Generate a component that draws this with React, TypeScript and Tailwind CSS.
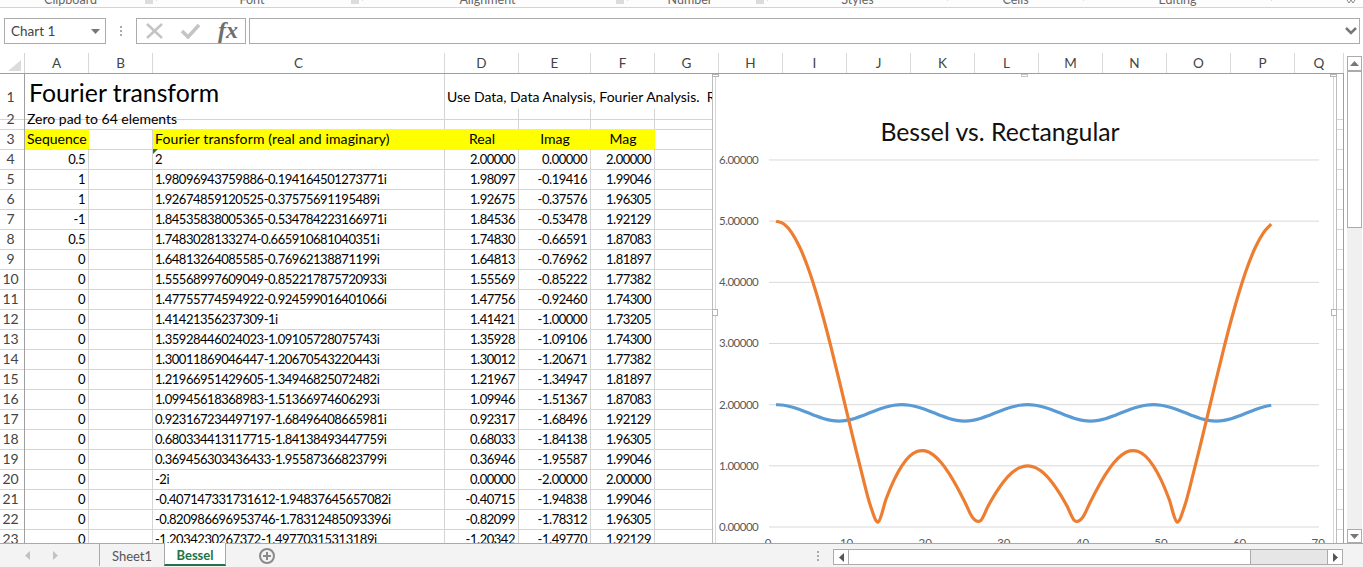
import React from 'react'

const colWidths = 'grid-cols-[25px_64px_64px_292px_74px_72px_64px_64px_64px_64px_64px_64px_64px_64px_64px_64px_64px_49px]'
const colNames = ['A', 'B', 'C', 'D', 'E', 'F', 'G', 'H', 'I', 'J', 'K', 'L', 'M', 'N', 'O', 'P', 'Q']
const num = 'text-[13px] tracking-[-0.47px]'

const rows: [string, string, string, string, string, string][] = [
  ['4', '0.5', '2', '2.00000', '0.00000', '2.00000'],
  ['5', '1', '1.98096943759886-0.194164501273771i', '1.98097', '-0.19416', '1.99046'],
  ['6', '1', '1.92674859120525-0.37575691195489i', '1.92675', '-0.37576', '1.96305'],
  ['7', '-1', '1.84535838005365-0.534784223166971i', '1.84536', '-0.53478', '1.92129'],
  ['8', '0.5', '1.7483028133274-0.665910681040351i', '1.74830', '-0.66591', '1.87083'],
  ['9', '0', '1.64813264085585-0.76962138871199i', '1.64813', '-0.76962', '1.81897'],
  ['10', '0', '1.55568997609049-0.852217875720933i', '1.55569', '-0.85222', '1.77382'],
  ['11', '0', '1.47755774594922-0.924599016401066i', '1.47756', '-0.92460', '1.74300'],
  ['12', '0', '1.41421356237309-1i', '1.41421', '-1.00000', '1.73205'],
  ['13', '0', '1.35928446024023-1.09105728075743i', '1.35928', '-1.09106', '1.74300'],
  ['14', '0', '1.30011869046447-1.20670543220443i', '1.30012', '-1.20671', '1.77382'],
  ['15', '0', '1.21966951429605-1.34946825072482i', '1.21967', '-1.34947', '1.81897'],
  ['16', '0', '1.09945618368983-1.51366974606293i', '1.09946', '-1.51367', '1.87083'],
  ['17', '0', '0.923167234497197-1.68496408665981i', '0.92317', '-1.68496', '1.92129'],
  ['18', '0', '0.680334413117715-1.84138493447759i', '0.68033', '-1.84138', '1.96305'],
  ['19', '0', '0.369456303436433-1.95587366823799i', '0.36946', '-1.95587', '1.99046'],
  ['20', '0', '-2i', '0.00000', '-2.00000', '2.00000'],
  ['21', '0', '-0.407147331731612-1.94837645657082i', '-0.40715', '-1.94838', '1.99046'],
  ['22', '0', '-0.820986696953746-1.78312485093396i', '-0.82099', '-1.78312', '1.96305'],
  ['23', '0', '-1.2034230267372-1.49770315313189i', '-1.20342', '-1.49770', '1.92129'],
]

const ribbon = [
  { name: 'Clipboard', w: 'w-[157px]', launcher: true },
  { name: 'Font', w: 'w-[206px]', launcher: true },
  { name: 'Alignment', w: 'w-[265px]', launcher: true },
  { name: 'Number', w: 'w-[140px]', launcher: true },
  { name: 'Styles', w: 'w-[180px]', launcher: false },
  { name: 'Cells', w: 'w-[136px]', launcher: false },
  { name: 'Editing', w: 'w-[188px]', launcher: false },
]

// magnitude of the 64 point transform of a zero padded sequence
const magnitude = (seq: number[]) => {
  const out: number[] = []
  for (let k = 0; k < 64; k++) {
    let re = 0
    let im = 0
    seq.forEach((v, n) => {
      re += v * Math.cos((2 * Math.PI * n * k) / 64)
      im -= v * Math.sin((2 * Math.PI * n * k) / 64)
    })
    out.push(Math.sqrt(re * re + im * im))
  }
  return out
}

const smoothPath = (vals: number[]) => {
  const pts = vals.map((v, i) => [767.2 + (i + 1) * 7.86, 527 - v * 61.17])
  let d = `M${pts[0][0]} ${pts[0][1]}`
  for (let i = 0; i < pts.length - 1; i++) {
    const p0 = pts[Math.max(i - 1, 0)]
    const p1 = pts[i]
    const p2 = pts[i + 1]
    const p3 = pts[Math.min(i + 2, pts.length - 1)]
    d += ` C${p1[0] + (p2[0] - p0[0]) / 6} ${p1[1] + (p2[1] - p0[1]) / 6} ${p2[0] - (p3[0] - p1[0]) / 6} ${p2[1] - (p3[1] - p1[1]) / 6} ${p2[0]} ${p2[1]}`
  }
  return d
}

const yLabels = [0, 1, 2, 3, 4, 5, 6]
const xLabels = [0, 10, 20, 30, 40, 50, 60, 70]

function Chart() {
  return (
    <div className="absolute left-[712px] top-0 w-[625px] h-[469px] border-x border-[#bdbdbd] px-[2px] bg-white z-10">
      <div className="w-full h-full border-x border-[#d6d6d6]">
        <svg width="619" height="469" viewBox="715 74 619 469" className="block">
          <text x="999" y="141" textAnchor="middle" fontSize="24.8" fill="#111">Bessel vs. Rectangular</text>
          {yLabels.map((v) => (
            <g key={v}>
              <line x1="768" x2="1318" y1={527 - v * 61.17} y2={527 - v * 61.17} stroke="#d9d9d9" strokeWidth="1" />
              <text x="718" y={531 - v * 61.17} fontSize="11.5" letterSpacing="-0.5" fill="#595959">{v.toFixed(5)}</text>
            </g>
          ))}
          {xLabels.map((v) => (
            <text key={v} x={767 + v * 7.86} y="547" textAnchor="middle" fontSize="11.5" fill="#595959">{v}</text>
          ))}
          <path d={smoothPath(magnitude([0.5, 1, 1, -1, 0.5]))} fill="none" stroke="#5b9bd5" strokeWidth="3.2" />
          <path d={smoothPath(magnitude([1, 1, 1, 1, 1]))} fill="none" stroke="#ed7d31" strokeWidth="3.2" />
        </svg>
      </div>
      <div className="absolute -left-[1px] top-[235px] w-[6px] h-[7px] bg-white border border-[#b5b5b5]" />
      <div className="absolute -right-[1px] top-[235px] w-[6px] h-[7px] bg-white border border-[#b5b5b5]" />
      <div className="absolute left-[308px] top-0 w-[7px] h-[3px] bg-white border border-[#c8c8c8]" />
      <div className="absolute -left-[1px] top-0 w-[7px] h-[3px] bg-white border border-[#b5b5b5]" />
      <div className="absolute -right-[1px] top-0 w-[7px] h-[3px] bg-white border border-[#b5b5b5]" />
    </div>
  )
}

function RestCells({ from }: { from: number }) {
  const cells = []
  for (let i = from; i < 17; i++) {
    cells.push(<div key={i} className={`border-b border-r ${i === 16 ? 'border-r-[#a0a0a0] border-b-[#d4d4d4]' : 'border-[#d4d4d4]'}`} />)
  }
  return <>{cells}</>
}

function RowHead({ n, className }: { n: string; className?: string }) {
  return (
    <div className={`border-r border-r-[#9f9f9f] border-b border-b-[#d4d4d4] text-center text-[14px] text-[#444] pr-[3px] ${className || ''}`}>
      {n}
    </div>
  )
}

export default function App() {
  return (
    <div className="w-[1363px] h-[567px] overflow-hidden bg-white font-['Lato',sans-serif] text-[14px] text-black">
      {/* ribbon, cut off by the top of the window */}
      <div className="flex h-[8px] border-b border-[#d4d4d4] bg-[#fdfdfd] overflow-hidden">
        {ribbon.map((r) => (
          <div key={r.name} className={`${r.w} relative h-[8px] border-r border-[#dcdcdc] text-center text-[12.5px] leading-[14px] text-[#666] -mt-[7px] ${r.launcher ? 'pr-[15px]' : ''}`}>
            {r.name}
            {r.launcher && <span className="absolute right-[3px] top-[7px] w-[8px] h-[4px] bg-[#dcdcdc]" />}
          </div>
        ))}
        <div className="flex-1 flex justify-end pr-[7px]">
          <svg width="10" height="5" viewBox="0 0 10 5"><path d="M1 0l2 3 2-3M5 0l2 3 2-3" stroke="#888" fill="none" /></svg>
        </div>
      </div>

      {/* formula bar */}
      <div className="flex items-center h-[45px] pl-[4px]">
        <div className="w-[102px] h-[26px] border border-[#ababab] flex items-center justify-between pl-[6px] pr-[5px] pt-[1px] text-[13.5px] text-[#444]">
          Chart 1
          <svg width="9" height="5" viewBox="0 0 9 5"><path d="M0 0h9L4.500 5z" fill="#777" /></svg>
        </div>
        <div className="w-[30px] flex flex-col items-center gap-[2px]">
          <span className="w-[2px] h-[2px] bg-[#aaa]" />
          <span className="w-[2px] h-[2px] bg-[#aaa]" />
          <span className="w-[2px] h-[2px] bg-[#aaa]" />
        </div>
        <div className="w-[110px] h-[26px] border border-[#ababab] flex items-center">
          <svg width="18" height="16" viewBox="0 0 18 16" className="ml-[9px]">
            <path d="M1 1l15 14M16 1L1 15" stroke="#c4c4c4" strokeWidth="2.500" fill="none" />
          </svg>
          <svg width="20" height="16" viewBox="0 0 20 16" className="ml-[17px]">
            <path d="M1 8l6 6L18 2" stroke="#c4c4c4" strokeWidth="3.500" fill="none" />
          </svg>
          <span className="ml-[17px] font-['Liberation_Serif',serif] italic font-bold text-[24px] leading-none text-[#6e6e6e] -mt-[2px]">fx</span>
        </div>
        <div className="ml-[3px] w-[1111px] h-[26px] border border-[#ababab] flex items-center justify-end pr-[2px]">
          <svg width="12" height="8" viewBox="0 0 12 8"><path d="M1 1l5 5 5-5" stroke="#777" strokeWidth="2.500" fill="none" /></svg>
        </div>
      </div>

      <div className="flex h-[490px]">
        <div className="w-[1344px]">
          {/* column headers */}
          <div className={`grid ${colWidths} h-[21px] border-b border-[#9f9f9f]`}>
            <div className="flex items-end justify-end pr-[3px] pb-[2px] border-r border-[#d4d4d4]">
              <svg width="13" height="11" viewBox="0 0 13 11"><path d="M13 0v11H0z" fill="#dcdcdc" /></svg>
            </div>
            {colNames.map((c) => (
              <div key={c} className="text-center text-[13.5px] leading-[20px] text-[#444] border-r border-[#d8d8d8]">{c}</div>
            ))}
          </div>

          {/* sheet */}
          <div className="relative h-[469px] overflow-hidden">
            <div className={`grid ${colWidths} h-[35px]`}>
              <RowHead n="1" className="leading-[45px]" />
              <div className="col-span-3 border-r border-b border-[#d4d4d4] pl-[4px] text-[24.8px] leading-[37px] whitespace-nowrap">Fourier transform</div>
              <div className="col-span-4 border-b border-[#d4d4d4] pl-[2px] leading-[45px] whitespace-nowrap overflow-hidden">Use Data, Data Analysis, Fourier Analysis.&nbsp; Results are complex</div>
              <RestCells from={7} />
            </div>
            <div className={`grid ${colWidths} h-[20px] leading-[20px]`}>
              <RowHead n="2" />
              <div className="col-span-3 border-r border-b border-[#d4d4d4] pl-[2px] whitespace-nowrap">Zero pad to 64 elements</div>
              <RestCells from={3} />
            </div>
            <div className={`grid ${colWidths} h-[20px] leading-[20px]`}>
              <RowHead n="3" />
              <div className="bg-[#ffff00] pl-[2px]">Sequence</div>
              <div className="border-r border-b border-[#d4d4d4]" />
              <div className="bg-[#ffff00] pl-[2px] whitespace-nowrap tracking-[0.13px]">Fourier transform (real and imaginary)</div>
              <div className="bg-[#ffff00] text-center">Real</div>
              <div className="bg-[#ffff00] text-center">Imag</div>
              <div className="bg-[#ffff00] text-center">Mag</div>
              <RestCells from={6} />
            </div>
            {rows.map((r) => (
              <div key={r[0]} className={`grid ${colWidths} h-[20px] leading-[20px]`}>
                <RowHead n={r[0]} />
                <div className={`border-r border-b border-[#d4d4d4] text-right pr-[3px] ${num}`}>{r[1]}</div>
                <div className="border-r border-b border-[#d4d4d4]" />
                <div className={`relative border-r border-b border-[#d4d4d4] pl-[2px] whitespace-nowrap ${num}`}>
                  {r[0] === '4' && (
                    <svg width="5" height="5" viewBox="0 0 5 5" className="absolute left-0 top-0"><path d="M0 0h5L0 5z" fill="#1f7a3c" /></svg>
                  )}
                  {r[2]}
                </div>
                <div className={`border-r border-b border-[#d4d4d4] text-right pr-[3px] ${num}`}>{r[3]}</div>
                <div className={`border-r border-b border-[#d4d4d4] text-right pr-[3px] ${num}`}>{r[4]}</div>
                <div className={`border-r border-b border-[#d4d4d4] text-right pr-[3px] ${num}`}>{r[5]}</div>
                <RestCells from={6} />
              </div>
            ))}
            <Chart />
          </div>
        </div>

        {/* vertical scrollbar */}
        <div className="w-[19px] pl-[3px] pr-[1px] pt-[3px] flex flex-col">
          <div className="h-[15px] border border-[#ababab] flex items-center justify-center">
            <svg width="9" height="5" viewBox="0 0 9 5"><path d="M0 5h9L4.500 0z" fill="#777" /></svg>
          </div>
          <div className="h-[157px] border-x border-b border-[#ababab] bg-white border-t border-t-[#ababab]" />
          <div className="flex-1 bg-[#f0f0f0]" />
          <div className="h-[14px] border border-[#ababab] flex items-center justify-center">
            <svg width="9" height="5" viewBox="0 0 9 5"><path d="M0 0h9L4.500 5z" fill="#777" /></svg>
          </div>
        </div>
      </div>

      {/* sheet tabs */}
      <div className="flex items-start h-[24px] bg-[#f3f3f3] border-t border-[#a9a9a9] relative">
        <div className="w-[99px] h-[23px] flex items-center pl-[25px] gap-[23px]">
          <svg width="5" height="9" viewBox="0 0 5 9"><path d="M5 0v9L0 4.500z" fill="#c2c2c2" /></svg>
          <svg width="5" height="9" viewBox="0 0 5 9"><path d="M0 0v9l5-4.500z" fill="#c2c2c2" /></svg>
        </div>
        <div className="w-[65px] h-[22px] border-l border-[#a9a9a9] text-center text-[13px] leading-[24px] text-[#555]">Sheet1</div>
        <div className="w-[62px] h-[23px] -mt-[1px] bg-white border-x border-[#a9a9a9] border-b-2 border-b-[#217346] text-center text-[13px] font-bold leading-[25px] text-[#217346]">Bessel</div>
        <div className="ml-[33px] mt-[4px] w-[16px] h-[16px] rounded-full border-2 border-[#8a8a8a] flex items-center justify-center">
          <svg width="8" height="8" viewBox="0 0 8 8"><path d="M4 0v8M0 4h8" stroke="#8a8a8a" strokeWidth="2" /></svg>
        </div>
        <div className="ml-[542px] mt-[7px] flex flex-col gap-[2px]">
          <span className="w-[2px] h-[2px] bg-[#aaa]" />
          <span className="w-[2px] h-[2px] bg-[#aaa]" />
          <span className="w-[2px] h-[2px] bg-[#aaa]" />
        </div>
        <div className="ml-[14px] mt-[5px] w-[510px] h-[16px] flex bg-[#e6e6e6] border border-[#ababab]">
          <div className="w-[15px] bg-white border-r border-[#ababab] flex items-center justify-center">
            <svg width="5" height="9" viewBox="0 0 5 9"><path d="M5 0v9L0 4.500z" fill="#555" /></svg>
          </div>
          <div className="w-[402px] bg-white border-r border-[#ababab]" />
          <div className="flex-1" />
          <div className="w-[15px] bg-white border-l border-[#ababab] flex items-center justify-center">
            <svg width="5" height="9" viewBox="0 0 5 9"><path d="M0 0v9l5-4.500z" fill="#555" /></svg>
          </div>
        </div>
      </div>
    </div>
  )
}
